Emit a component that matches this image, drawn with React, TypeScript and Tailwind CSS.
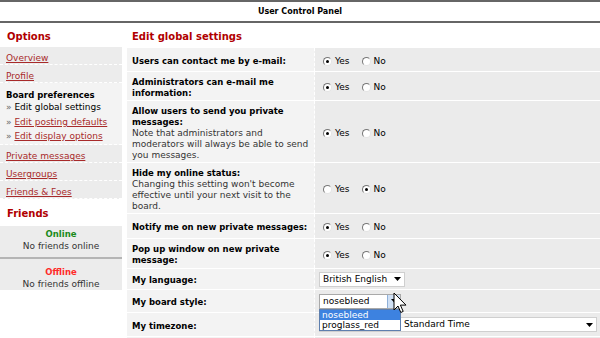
import type { ReactNode } from "react"

function Radio({ checked }: { checked?: boolean }) {
  return (
    <span className="relative inline-block h-[9px] w-[9px] shrink-0 rounded-full border border-t-[#777] border-l-[#777] border-b-[#e4e4e4] border-r-[#e4e4e4] bg-white">
      {checked && (
        <span className="absolute left-[2px] top-[2px] h-[3px] w-[3px] rounded-full bg-black" />
      )}
    </span>
  )
}

function YesNo({ yes }: { yes: boolean }) {
  return (
    <div className="flex items-center pl-[8px] pt-[3px]">
      <Radio checked={yes} />
      <span className="ml-[3px]">Yes</span>
      <span className="ml-[12px] flex">
        <Radio checked={!yes} />
      </span>
      <span className="ml-[3px]">No</span>
    </div>
  )
}

function Caret() {
  return (
    <svg width="7" height="4" viewBox="0 0 7 4" className="shrink-0">
      <path d="M0 0h7L3.5 4z" fill="#000" />
    </svg>
  )
}

function Cursor() {
  return (
    <svg width="14" height="23" viewBox="0 0 14 23" className="absolute left-[78px] top-[-2px] z-20">
      <path
        d="M1 1v17l4-4 2.8 6.5 2.4-1.1-2.8-6.3H13z"
        fill="#fff"
        stroke="#000"
        strokeWidth="1"
        strokeLinejoin="round"
      />
    </svg>
  )
}

type Row = { h: string; label: ReactNode; value: ReactNode }

const rows: Row[] = [
  {
    h: "h-[24px]",
    label: <b>Users can contact me by e-mail:</b>,
    value: <YesNo yes />,
  },
  {
    h: "h-[29px]",
    label: (
      <b>
        Administrators can e-mail me
        <br />
        information:
      </b>
    ),
    value: <YesNo yes />,
  },
  {
    h: "h-[62px]",
    label: (
      <>
        <b>
          Allow users to send you private
          <br />
          messages:
        </b>
        <br />
        <span className="text-[#333]">
          Note that administrators and
          <br />
          moderators will always be able to send
          <br />
          you messages.
        </span>
      </>
    ),
    value: <YesNo yes />,
  },
  {
    h: "h-[51px]",
    label: (
      <>
        <b>Hide my online status:</b>
        <br />
        <span className="text-[#333]">
          Changing this setting won't become
          <br />
          effective until your next visit to the
          <br />
          board.
        </span>
      </>
    ),
    value: <YesNo yes={false} />,
  },
  {
    h: "h-[25px]",
    label: <b>Notify me on new private messages:</b>,
    value: <YesNo yes />,
  },
  {
    h: "h-[30px]",
    label: (
      <b>
        Pop up window on new private
        <br />
        message:
      </b>
    ),
    value: <YesNo yes />,
  },
  {
    h: "h-[21px]",
    label: <b>My language:</b>,
    value: (
      <div className="pl-[4px]">
        <div className="flex h-[15px] w-[86px] items-center justify-between border border-[#cfcfcf] bg-white pl-[3px] pr-[3px]">
          <span>British English</span>
          <Caret />
        </div>
      </div>
    ),
  },
  {
    h: "h-[23px]",
    label: <b>My board style:</b>,
    value: (
      <div className="relative pl-[4px]">
        <div className="flex h-[15px] w-[82px] items-center border border-[#a9a9a9] bg-white">
          <span className="flex-1 pl-[3px]">nosebleed</span>
          <span className="flex h-[13px] w-[13px] items-center justify-center border-l border-[#8fb0d8] bg-[#cfe0f5]">
            <Caret />
          </span>
        </div>
        <div className="absolute left-[4px] top-[15px] z-10 w-[82px] border border-[#5e7fae] bg-white leading-[10px]">
          <div className="bg-[#3d82e0] pl-[2px] text-white">nosebleed</div>
          <div className="pl-[2px]">proglass_red</div>
        </div>
        <Cursor />
      </div>
    ),
  },
  {
    h: "h-[24px]",
    label: <b>My timezone:</b>,
    value: (
      <div className="flex-1 pl-[4px] pr-[3px]">
        <div className="flex h-[15px] items-center border border-[#cfcfcf] bg-white pr-[3px]">
          <span className="w-[84px] shrink-0" />
          <span className="flex-1">Standard Time</span>
          <Caret />
        </div>
      </div>
    ),
  },
  {
    h: "h-[10px]",
    label: null,
    value: null,
  },
]

const navItem =
  "flex h-[18px] items-center border-b border-dashed border-white bg-[#ececec] pl-[6px] pt-[6px] text-[#a82a2a] underline"

export default function App() {
  return (
    <div className="h-[338px] w-[600px] overflow-hidden bg-white font-['DejaVu_Sans',Verdana,sans-serif] text-[9px] leading-[11px] text-black [&_b]:text-[8.5px]">
      <div className="flex h-[23px] items-center justify-center border-y-2 border-[#666] text-[8px] font-bold">
        User Control Panel
      </div>

      <div className="flex">
        <aside className="w-[122px] shrink-0">
          <h2 className="flex h-[24px] items-center pl-[7px] pt-[2px] text-[10px] font-bold text-[#b00000]">
            Options
          </h2>
          <div className={navItem}>Overview</div>
          <div className={navItem}>Profile</div>
          <div className="border-b border-dashed border-white bg-[#f3f3f3] pl-[6px] pt-[7px]">
            <div className="h-[12px]">
              <b>Board preferences</b>
            </div>
            <div className="h-[12px]">
              <span className="text-[#666]">»</span> Edit global settings
            </div>
            <div className="mt-[3px] h-[14px]">
              <span className="text-[#666]">»</span>{" "}
              <span className="text-[#a82a2a] underline">Edit posting defaults</span>
            </div>
            <div className="h-[13px]">
              <span className="text-[#666]">»</span>{" "}
              <span className="text-[#a82a2a] underline">Edit display options</span>
            </div>
          </div>
          <div className={navItem}>Private messages</div>
          <div className={navItem}>Usergroups</div>
          <div className={navItem}>Friends &amp; Foes</div>

          <h2 className="flex h-[27px] items-center pl-[7px] pt-[2px] text-[10px] font-bold text-[#b00000]">
            Friends
          </h2>
          <div className="flex h-[31px] flex-col items-center bg-[#ececec] pt-[2px] leading-[12px]">
            <b className="text-[#1a8a1a]">Online</b>
            <span className="text-[#333]">No friends online</span>
          </div>
          <div className="h-[2px] bg-[#b5b5b5]" />
          <div className="flex h-[31px] flex-col items-center bg-[#ececec] pt-[7px] leading-[12px]">
            <b className="text-[#ff2a2a]">Offline</b>
            <span className="text-[#333]">No friends offline</span>
          </div>
        </aside>

        <main className="ml-[5px] flex-1">
          <h2 className="flex h-[25px] items-center pl-[5px] pt-[1px] text-[10px] font-bold text-[#b00000]">
            Edit global settings
          </h2>
          <div className="flex flex-col">
            {rows.map((r, i) => (
              <div key={i} className={`flex ${r.h} border-b border-dashed border-white`}>
                <div className="flex w-[188px] shrink-0 items-center whitespace-nowrap border-r border-dashed border-white bg-[#f3f3f3] pl-[5px] pt-[3px]">
                  <div>{r.label}</div>
                </div>
                <div className="flex flex-1 items-center bg-[#ebebeb]">{r.value}</div>
              </div>
            ))}
          </div>
        </main>
      </div>
    </div>
  )
}
